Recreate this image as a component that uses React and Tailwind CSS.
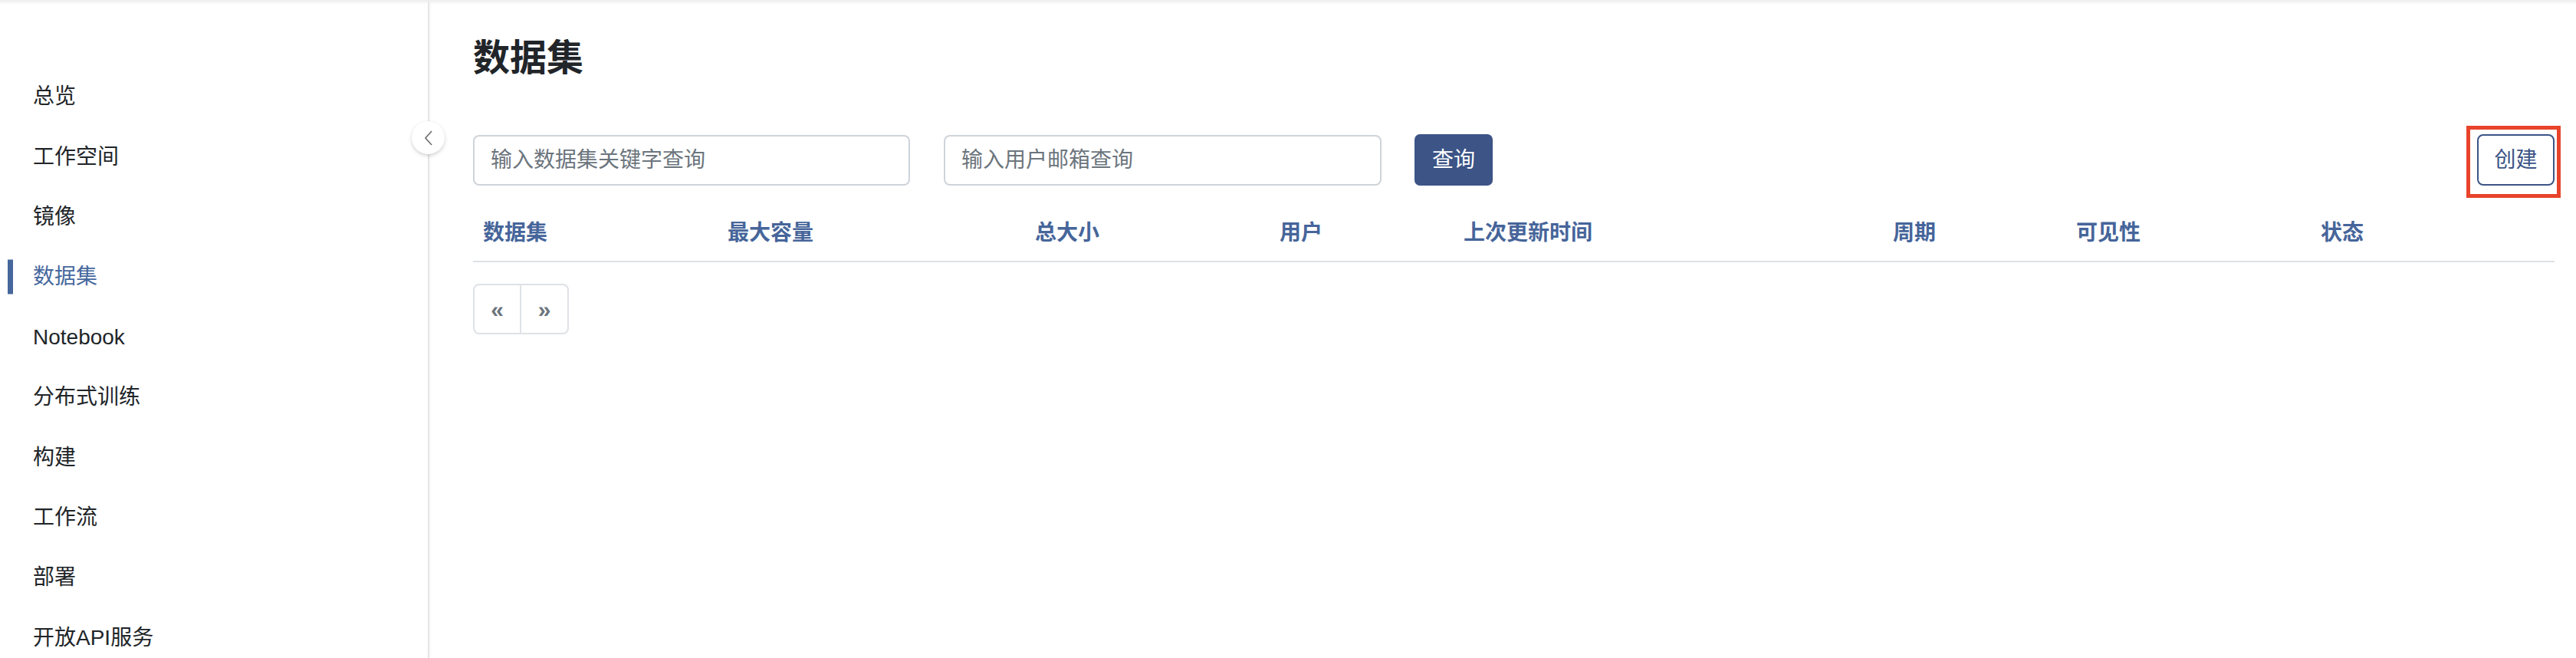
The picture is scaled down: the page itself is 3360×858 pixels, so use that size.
import React from "react";

const NAV = ["总览", "工作空间", "镜像", "数据集", "Notebook", "分布式训练", "构建", "工作流", "部署", "开放API服务"];

const COLS = [
  { label: "数据集", w: "w-[319px]" },
  { label: "最大容量", w: "w-[401px]" },
  { label: "总大小", w: "w-[319px]" },
  { label: "用户", w: "w-[240px]" },
  { label: "上次更新时间", w: "w-[560px]" },
  { label: "周期", w: "w-[239px]" },
  { label: "可见性", w: "w-[319px]" },
  { label: "状态", w: "w-[318px]" },
];

const font = { fontFamily: '"Liberation Sans", "Noto Sans CJK SC", sans-serif' };

export default function App() {
  return (
    <div className="relative h-[858px] w-full overflow-hidden bg-white text-[#212529]" style={font}>
      <div className="absolute inset-x-0 top-0 z-20 h-[6px] bg-gradient-to-b from-[#ededed] to-transparent" />

      <div className="flex h-full">
        {/* sidebar */}
        <aside className="relative w-[560px] shrink-0 border-r-2 border-[#e6e6e6] pt-[87px] shadow-[2px_0_4px_rgba(0,0,0,0.03)]">
          {NAV.map((item) => {
            const active = item === "数据集";
            return (
              <div key={item} className="relative flex h-[78.4px] items-center pl-[43px]">
                {active && <div className="absolute left-[10px] top-1/2 h-[45px] w-[7px] -translate-y-1/2 bg-[#46679c]" />}
                <span className={`text-[28px] leading-none ${active ? "text-[#46689d]" : "text-[#212529]"}`}>{item}</span>
              </div>
            );
          })}
          <button className="absolute -right-[22px] top-[158px] z-10 flex h-[43px] w-[43px] items-center justify-center rounded-full bg-white shadow-[0_2px_5px_rgba(0,0,0,0.18)]">
            <svg width="12" height="20" viewBox="0 0 12 20" fill="none">
              <path d="M10 1 L2 10 L10 19" stroke="#6b6b6b" strokeWidth="1.6" />
            </svg>
          </button>
        </aside>

        {/* main */}
        <main className="min-w-0 flex-1 pl-[57px] pr-[28px]">
          <h1 className="pt-[52px] text-[48px] font-bold leading-none text-[#212529]">数据集</h1>

          <div className="mt-[75px] flex h-[67px] items-center">
            <input
              className="h-[66px] w-[570px] rounded-[8px] border-2 border-[#ced4da] px-[21px] text-[28px] outline-none placeholder:text-[#6c757d]"
              placeholder="输入数据集关键字查询"
              style={font}
            />
            <input
              className="ml-[44px] h-[66px] w-[571px] rounded-[8px] border-2 border-[#ced4da] px-[21px] text-[28px] outline-none placeholder:text-[#6c757d]"
              placeholder="输入用户邮箱查询"
              style={font}
            />
            <button className="ml-[43px] h-[67px] w-[102px] rounded-[7px] bg-[#3c5486] text-[28px] text-white">查询</button>
            <div className="relative ml-auto">
              <button className="h-[67px] w-[101px] rounded-[8px] border-2 border-[#3c5486] text-[28px] text-[#3c5486]">创建</button>
              <div className="pointer-events-none absolute -bottom-[16px] -left-[14px] -right-[8px] -top-[11px] border-[5px] border-[#e8432b]" />
            </div>
          </div>

          <div className="mt-[25px] flex h-[75px] items-center border-b-2 border-[#dee2e6]">
            {COLS.map((c) => (
              <div key={c.label} className={`${c.w} shrink-0 pl-[13px] text-[28px] font-bold text-[#46659a]`}>
                {c.label}
              </div>
            ))}
          </div>

          <div className="mt-[28px] flex h-[66px] w-[125px] overflow-hidden rounded-[8px] border-2 border-[#dee2e6]">
            <button className="flex w-[61px] items-center justify-center border-r-2 border-[#dee2e6] text-[30px] font-bold text-[#6c757d]">«</button>
            <button className="flex flex-1 items-center justify-center text-[30px] font-bold text-[#6c757d]">»</button>
          </div>
        </main>
      </div>
    </div>
  );
}
